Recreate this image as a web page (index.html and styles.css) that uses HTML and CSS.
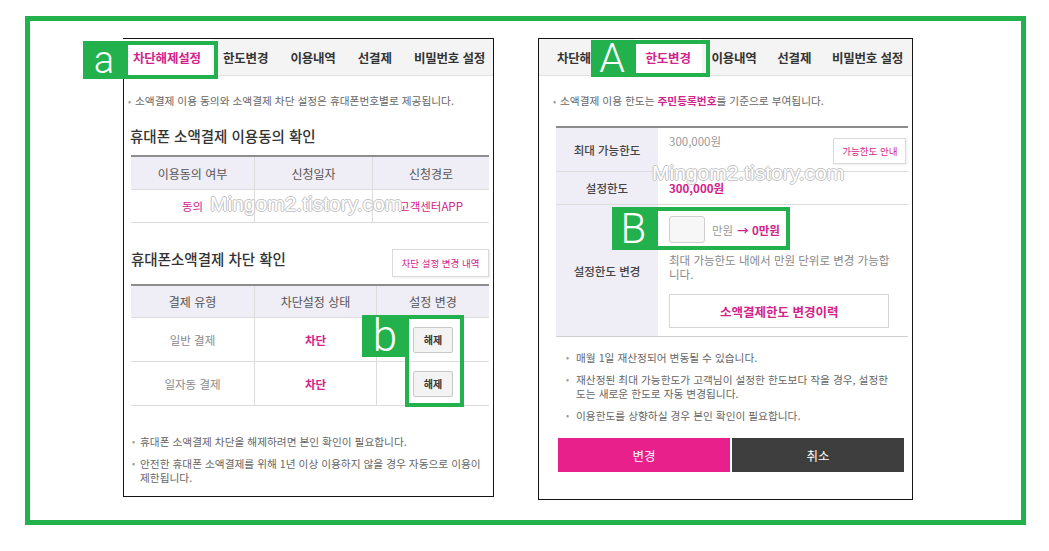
FILE: index.html
```html
<!DOCTYPE html>
<html lang="ko">
<head>
<meta charset="utf-8">
<title>소액결제 설정</title>
<link rel="stylesheet" href="styles.css">
</head>
<body>
<div class="frame">
  <section class="panel panel-block">
    <nav class="tabs tabs-block">
      <span class="tab active">차단해제설정</span>
      <span class="tab">한도변경</span>
      <span class="tab">이용내역</span>
      <span class="tab">선결제</span>
      <span class="tab">비밀번호 설정</span>
    </nav>
    <div class="content content-block">
      <p class="lead">소액결제 이용 동의와 소액결제 차단 설정은 휴대폰번호별로 제공됩니다.</p>
      <h2 class="title title-first">휴대폰 소액결제 이용동의 확인</h2>
      <div class="grid grid-consent">
        <div class="cell head">이용동의 여부</div>
        <div class="cell head">신청일자</div>
        <div class="cell head">신청경로</div>
        <div class="cell pink">동의</div>
        <div class="cell pink"></div>
        <div class="cell pink">고객센터APP</div>
      </div>
      <div class="title-row">
        <h2 class="title">휴대폰소액결제 차단 확인</h2>
        <button class="small-btn history-btn">차단 설정 변경 내역</button>
      </div>
      <div class="grid grid-block">
        <div class="cell head">결제 유형</div>
        <div class="cell head">차단설정 상태</div>
        <div class="cell head">설정 변경</div>
        <div class="cell tall muted">일반 결제</div>
        <div class="cell tall pink strong">차단</div>
        <div class="cell tall"><button class="release">해제</button></div>
        <div class="cell tall muted">일자동 결제</div>
        <div class="cell tall pink strong">차단</div>
        <div class="cell tall"><button class="release">해제</button></div>
      </div>
      <ul class="notes notes-block">
        <li><span>휴대폰 소액결제 차단을 해제하려면 본인 확인이 필요합니다.</span></li>
        <li><span>안전한 휴대폰 소액결제를 위해 1년 이상 이용하지 않을 경우 자동으로 이용이<br>제한됩니다.</span></li>
      </ul>
    </div>
    <div class="watermark wm-block">Mingom2.tistory.com</div>
    <div class="ring ring-a"></div>
    <div class="tag tag-a">a</div>
    <div class="ring ring-b"></div>
    <div class="tag tag-b">b</div>
  </section>

  <section class="panel panel-limit">
    <nav class="tabs tabs-limit">
      <span class="tab">차단해제설정</span>
      <span class="tab active">한도변경</span>
      <span class="tab">이용내역</span>
      <span class="tab">선결제</span>
      <span class="tab">비밀번호 설정</span>
    </nav>
    <div class="content content-limit">
      <p class="lead">소액결제 이용 한도는 <b class="pink">주민등록번호</b>를 기준으로 부여됩니다.</p>
      <div class="limit-table">
        <div class="lbl row-max">최대 가능한도</div>
        <div class="val row-max val-max">
          <span class="max-amount">300,000원</span>
          <button class="small-btn guide-btn">가능한도 안내</button>
        </div>
        <div class="lbl row-set">설정한도</div>
        <div class="val row-set val-set"><span class="pink strong">300,000원</span></div>
        <div class="lbl row-change">설정한도 변경</div>
        <div class="val row-change val-change">
          <div class="amount-line">
            <input class="amount-input" type="text" value="">
            <span class="unit">만원</span>
            <span class="pink strong">→ 0만원</span>
          </div>
          <p class="desc">최대 가능한도 내에서 만원 단위로 변경 가능합<br>니다.</p>
          <button class="wide-btn">소액결제한도 변경이력</button>
        </div>
      </div>
      <ul class="notes notes-limit">
        <li><span>매월 1일 재산정되어 변동될 수 있습니다.</span></li>
        <li><span>재산정된 최대 가능한도가 고객님이 설정한 한도보다 작을 경우, 설정한<br>도는 새로운 한도로 자동 변경됩니다.</span></li>
        <li><span>이용한도를 상향하실 경우 본인 확인이 필요합니다.</span></li>
      </ul>
      <div class="actions">
        <button class="act act-ok">변경</button>
        <button class="act act-cancel">취소</button>
      </div>
    </div>
    <div class="watermark wm-limit">Mingom2.tistory.com</div>
    <div class="ring ring-A"></div>
    <div class="tag tag-A">A</div>
    <div class="ring ring-B"></div>
    <div class="tag tag-B">B</div>
  </section>
</div>
</body>
</html>
```

FILE: styles.css
```css
* { box-sizing: border-box; }

html, body {
  margin: 0;
  padding: 0;
  background: #ffffff;
}

body {
  width: 1049px;
  height: 551px;
  overflow: hidden;
  font-family: "Noto Sans CJK KR", "Noto Sans", sans-serif;
  color: #333;
}

.frame {
  margin: 16px 0 0 25px;
  width: 1001px;
  height: 509px;
  border: 5px solid #22b14c;
  padding: 17px 0 0 93px;
  display: flex;
  align-items: flex-start;
  gap: 44px;
}

.panel {
  position: relative;
  display: flex;
  flex-direction: column;
  background: #fff;
  border: 1px solid #151515;
}

.panel-block { width: 371px; height: 459px; }
.panel-limit { width: 375px; height: 462px; }

/* tabs */
.tabs {
  flex: none;
  height: 37px;
  display: flex;
  justify-content: space-between;
  align-items: stretch;
  background: #f4f4f4;
  border-bottom: 1px solid #e2e2e2;
}
.tabs-block { padding: 0 8px 0 9px; }
.tabs-limit { padding: 0 9px 0 18px; }

.tab {
  display: flex;
  align-items: center;
  font-size: 12.5px;
  font-weight: 700;
  letter-spacing: -0.2px;
  color: #333;
  white-space: nowrap;
}
.tab.active {
  color: #d3228a;
  background: #fff;
  margin: 0 -11px;
  padding: 0 11px;
}

/* content */
.content-block { padding: 0 4px; }
.content-limit { padding: 0 4px 0 14px; }

.pink { color: #d3228a; }
.strong { font-weight: 700; }
.muted { color: #8a8a8a; }

.lead {
  margin: 18px 0 0;
  font-size: 10.7px;
  line-height: 14px;
  color: #666;
  white-space: nowrap;
}
.lead::before {
  content: "•";
  display: inline-block;
  width: 7px;
  color: #9a9a9a;
  font-size: 9px;
}
.lead b { font-weight: 700; }

.title {
  margin: 0;
  font-size: 14.5px;
  line-height: 20px;
  font-weight: 500;
  letter-spacing: 0;
  color: #333;
}
.title-first { margin: 17px 0 0 2px; }

/* grids (left panel tables) */
.grid {
  display: grid;
  margin: 9px 0 0 3px;
  width: 358px;
  border-top: 2px solid #8d8d8d;
}
.grid-consent {
  grid-template-columns: 123px 118px 117px;
  grid-auto-rows: 33px;
}
.grid-block {
  margin-top: 7px;
  grid-template-columns: 123px 122px 113px;
  grid-template-rows: 32px 44px 44px;
}

.cell {
  display: flex;
  align-items: center;
  justify-content: center;
  border-bottom: 1px solid #dcdcdc;
  font-size: 11.5px;
  white-space: nowrap;
}
.cell:nth-child(3n+2),
.cell:nth-child(3n) { border-left: 1px solid #dcdcdc; }
.cell.head {
  background: #efedf6;
  color: #555;
  font-size: 12px;
}

.title-row {
  margin: 26px 0 0 3px;
  display: flex;
  justify-content: space-between;
  align-items: flex-start;
}

.small-btn {
  padding: 0;
  background: #fff;
  border: 1px solid #dadada;
  box-shadow: 1px 1px 2px rgba(0, 0, 0, 0.08);
  font-family: "Noto Sans CJK KR", sans-serif;
  font-size: 9.5px;
  color: #d3228a;
  white-space: nowrap;
}
.history-btn { width: 97px; height: 28px; }

.release {
  width: 40px;
  height: 26px;
  padding: 0;
  background: #f3f3f3;
  border: 1px solid #c8c8c8;
  border-radius: 2px;
  font-family: "Noto Sans CJK KR", sans-serif;
  font-size: 10px;
  font-weight: 700;
  color: #333;
}

/* notes */
.notes {
  list-style: none;
  padding: 0;
  display: flex;
  flex-direction: column;
  gap: 8px;
}
.notes li {
  display: flex;
  font-size: 10.7px;
  line-height: 14px;
  color: #666;
  white-space: nowrap;
}
.notes li::before {
  content: "•";
  flex: none;
  color: #9a9a9a;
  font-size: 9px;
}
.notes-block { margin: 29px 0 0 4px; }
.notes-block li::before { width: 8px; }
.notes-limit { margin: 14px 0 0 13px; }
.notes-limit li::before { width: 10px; }

/* right panel table */
.limit-table {
  display: grid;
  grid-template-columns: 102px 1fr;
  grid-template-rows: 44px 33px 132px;
  margin: 17px 0 0 3px;
  border-top: 2px solid #8d8d8d;
}
.lbl {
  display: flex;
  align-items: center;
  justify-content: center;
  background: #efedf6;
  border-bottom: 1px solid #dcdcdc;
  font-size: 11.5px;
  font-weight: 500;
  color: #444;
  white-space: nowrap;
}
.val {
  border-bottom: 1px solid #dcdcdc;
  font-size: 11.5px;
}
.row-change { border-bottom-color: #cfcfcf; }

.val-max {
  display: flex;
  justify-content: space-between;
  align-items: flex-start;
  padding: 6px 2px 0 11px;
}
.max-amount { line-height: 14px; color: #9a9a9a; }
.guide-btn { width: 73px; height: 26px; margin-top: 4px; }

.val-set {
  display: flex;
  align-items: center;
  padding-left: 11px;
}

.val-change {
  display: flex;
  flex-direction: column;
  padding: 11px 19px 8px 11px;
}
.amount-line {
  display: flex;
  align-items: center;
  gap: 7px;
  height: 27px;
}
.amount-input {
  width: 36px;
  height: 27px;
  margin: 0;
  padding: 0;
  background: #f7f7f7;
  border: 1px solid #cfcfcf;
  border-radius: 3px;
}
.unit { color: #999; }
.amount-line .pink { margin-left: -3px; }

.desc {
  margin: 10px 0 0;
  font-size: 11.5px;
  line-height: 14px;
  color: #888;
  white-space: nowrap;
}
.wide-btn {
  margin-top: 13px;
  height: 34px;
  width: 100%;
  padding: 0;
  background: #fff;
  border: 1px solid #d6d6d6;
  font-family: "Noto Sans CJK KR", sans-serif;
  font-size: 12.5px;
  font-weight: 700;
  color: #d3228a;
}

.actions {
  margin: 15px 4px 0 5px;
  display: grid;
  grid-template-columns: 1fr 1fr;
  gap: 2px;
  height: 34px;
}
.act {
  border: 0;
  padding: 0;
  font-family: "Noto Sans CJK KR", sans-serif;
  font-size: 12.5px;
  color: #fff;
}
.act-ok { background: #e8208b; }
.act-cancel { background: #3e3e3e; }

/* watermark overlay */
.watermark {
  position: absolute;
  font-family: "Liberation Sans", Arial, sans-serif;
  font-size: 21px;
  line-height: 24px;
  color: #fff;
  white-space: nowrap;
  text-shadow: 1px 0 #c4c4c4, -1px 0 #c4c4c4, 0 1px #c4c4c4, 0 -1px #c4c4c4;
}
.wm-block { left: 86px; top: 153px; }
.wm-limit { left: 113px; top: 122px; }

/* annotation overlays */
.tag {
  position: absolute;
  display: flex;
  align-items: center;
  justify-content: center;
  background: #22b14c;
  color: #fff;
  font-family: "Roboto", "Open Sans", sans-serif;
  font-weight: 300;
  line-height: 1;
}
.ring {
  position: absolute;
  border: 4px solid #22b14c;
}

.tag-a { left: -41px; top: 2px; width: 42px; height: 38px; font-size: 38px; }
.ring-a { left: 0; top: 2px; width: 94px; height: 38px; }
.tag-b { left: 238px; top: 276px; width: 46px; height: 42px; font-size: 44px; }
.ring-b { left: 281px; top: 276px; width: 59px; height: 92px; }

.tag-A { left: 52px; top: 1px; width: 42px; height: 37px; font-size: 41px; }
.ring-A { left: 93px; top: 1px; width: 78px; height: 37px; }
.tag-B { left: 73px; top: 168px; width: 43px; height: 43px; font-size: 42px; }
.ring-B { left: 115px; top: 168px; width: 136px; height: 43px; }
```
